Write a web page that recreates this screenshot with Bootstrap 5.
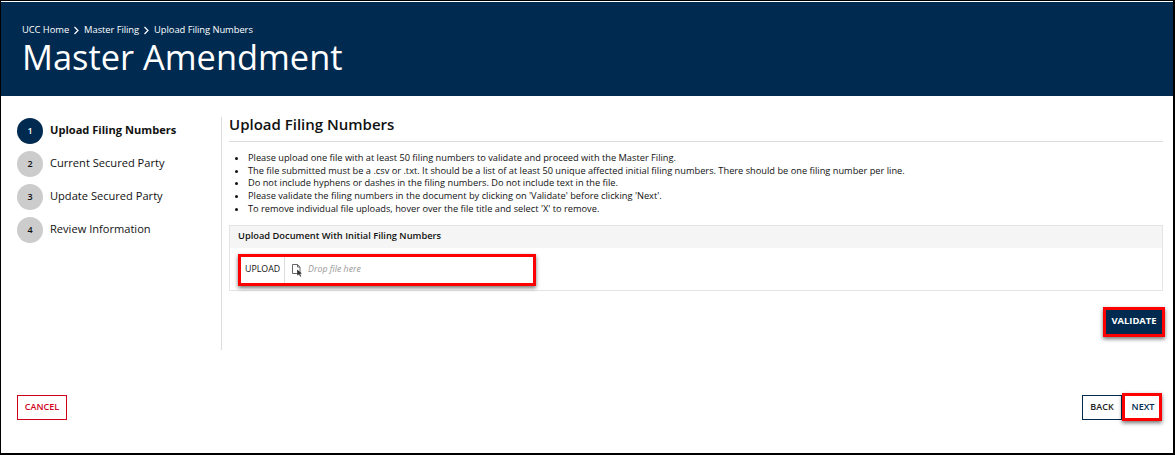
<!DOCTYPE html>
<html lang="en">
<head>
    <meta charset="UTF-8">
    <meta name="viewport" content="width=device-width, initial-scale=1.0">
    <title>Master Amendment</title>
    <link href="https://cdn.jsdelivr.net/npm/bootstrap@5.3.0/dist/css/bootstrap.min.css" rel="stylesheet">
    <style>
        body {
            font-family: "Open Sans", "Noto Sans", sans-serif;
            color: #111;
            background: #fff;
        }
        .page-frame {
            height: 455px;
            border: 1px solid #000;
            border-width: 1px 2px 2px 1px;
            overflow: hidden;
        }
        .page-head {
            height: 94px;
            margin-top: 1px;
            padding: 21px 21px 0;
            background: #002a50;
            color: #fff;
        }
        .crumbs {
            font-size: 9.4px;
            line-height: 14px;
            letter-spacing: -.06px;
        }
        .crumbs svg { margin: 0 4px; }
        .page-title {
            font-size: 34.4px;
            line-height: 40px;
            font-weight: 400;
            margin: 0;
        }
        .body-row {
            padding: 21px 10px 0 16px;
        }
        .steps {
            width: 204px;
            margin-top: -3px;
        }
        .step-item {
            height: 33px;
            font-size: 11.1px;
        }
        .step-num {
            width: 26px;
            height: 26px;
            border-radius: 50%;
            background: #ccc;
            font-size: 9px;
            font-weight: 600;
            margin-right: 7px;
        }
        .step-item.on { font-weight: 700; }
        .step-item.on .step-num { background: #002a50; color: #fff; }
        .main-pane {
            width: 942px;
            height: 233px;
            border-left: 1px solid #ddd;
            padding-left: 7px;
        }
        .pane-title {
            font-size: 15px;
            line-height: 14px;
            font-weight: 600;
            margin: 0;
            padding-bottom: 10px;
            border-bottom: 1px solid #ddd;
        }
        .rules {
            font-size: 9.26px;
            line-height: 12.7px;
            padding-left: 19px;
            margin: 10px 0 0;
        }
        .up-panel {
            margin-top: 9px;
            border: 1px solid #e4e4e4;
        }
        .up-head {
            height: 22px;
            padding: 0 0 2px 8px;
            background: #f5f5f5;
            font-size: 9.3px;
            font-weight: 600;
        }
        .up-body {
            padding: 6px 8px 4px;
        }
        .hot-mark {
            border: 3px solid #f00;
            box-shadow: 0 2px 4px rgba(0, 0, 0, .55);
        }
        .drop-box {
            width: 298px;
            height: 32px;
        }
        .up-btn {
            height: 100%;
            padding: 1px 4px 0;
            border-right: 1px solid #ddd;
            font-size: 8.8px;
            font-weight: 500;
        }
        .file-icon { margin: 1px 5px 0 7px; }
        .drop-text {
            padding-top: 1px;
            font-size: 8.8px;
            font-style: italic;
            color: #999;
        }
        .validate-btn {
            width: 62px;
            height: 30px;
            padding: 0;
            border-radius: 0;
            background: #002a50;
            color: #fff;
            font-size: 9.4px;
            font-weight: 700;
            margin: 16px -2px 0 0;
        }
        .foot-row {
            padding: 43px 11px 0 16px;
        }
        .foot-btn {
            width: 40px;
            height: 25px;
            padding: 0;
            border-radius: 0;
            font-size: 9px;
            font-weight: 600;
            background: #fff;
        }
        .cancel-btn { width: 50px; border: 1px solid #d0021b; color: #d0021b; }
        .back-btn { border: 1px solid #002a50; color: #222; }
        .next-btn {
            width: 40px;
            height: 28px;
            padding-left: 2px;
            color: #002a50;
        }
    </style>
</head>
<body>
    <div class="page-frame">
        <header class="page-head">
            <div class="crumbs d-flex align-items-center">
                <span>UCC Home</span>
                <svg width="7" height="9" viewBox="0 0 7 9"><path d="M1.5 1l3.5 3.5L1.5 8" fill="none" stroke="#fff" stroke-width="1.2"/></svg>
                <span>Master Filing</span>
                <svg width="7" height="9" viewBox="0 0 7 9"><path d="M1.5 1l3.5 3.5L1.5 8" fill="none" stroke="#fff" stroke-width="1.2"/></svg>
                <span>Upload Filing Numbers</span>
            </div>
            <h1 class="page-title">Master Amendment</h1>
        </header>

        <div class="body-row d-flex">
            <div class="steps">
                <div class="step-item on d-flex align-items-center"><span class="step-num d-flex align-items-center justify-content-center">1</span>Upload Filing Numbers</div>
                <div class="step-item d-flex align-items-center"><span class="step-num d-flex align-items-center justify-content-center">2</span>Current Secured Party</div>
                <div class="step-item d-flex align-items-center"><span class="step-num d-flex align-items-center justify-content-center">3</span>Update Secured Party</div>
                <div class="step-item d-flex align-items-center"><span class="step-num d-flex align-items-center justify-content-center">4</span>Review Information</div>
            </div>
            <main class="main-pane">
                <h2 class="pane-title">Upload Filing Numbers</h2>
                <ul class="rules">
                    <li>Please upload one file with at least 50 filing numbers to validate and proceed with the Master Filing.</li>
                    <li>The file submitted must be a .csv or .txt. It should be a list of at least 50 unique affected initial filing numbers. There should be one filing number per line.</li>
                    <li>Do not include hyphens or dashes in the filing numbers. Do not include text in the file.</li>
                    <li>Please validate the filing numbers in the document by clicking on 'Validate' before clicking 'Next'.</li>
                    <li>To remove individual file uploads, hover over the file title and select 'X' to remove.</li>
                </ul>
                <div class="up-panel">
                    <div class="up-head d-flex align-items-center">Upload Document With Initial Filing Numbers</div>
                    <div class="up-body">
                        <div class="drop-box hot-mark d-flex align-items-center">
                            <span class="up-btn d-flex align-items-center">UPLOAD</span>
                            <svg class="file-icon" width="11" height="13" viewBox="0 0 11 13">
                                <path d="M.5.5h5l2.5 2.5v6.5h-7.5z" fill="#fff" stroke="#666"/>
                                <path d="M5.5.5v2.5h2.5" fill="none" stroke="#666"/>
                                <path d="M5 5.5l5 4-2 .3 1.2 2.4-1 .5-1.2-2.4-1.6 1.4z" fill="#333"/>
                            </svg>
                            <span class="drop-text">Drop file here</span>
                        </div>
                    </div>
                </div>
                <div class="d-flex justify-content-end">
                    <button type="button" class="btn validate-btn hot-mark">VALIDATE</button>
                </div>
            </main>
        </div>

        <div class="foot-row d-flex justify-content-between align-items-center">
            <button type="button" class="btn foot-btn cancel-btn">CANCEL</button>
            <div class="d-flex align-items-center">
                <button type="button" class="btn foot-btn back-btn">BACK</button>
                <button type="button" class="btn foot-btn next-btn hot-mark">NEXT</button>
            </div>
        </div>
    </div>
    <script src="https://cdn.jsdelivr.net/npm/bootstrap@5.3.0/dist/js/bootstrap.bundle.min.js"></script>
</body>
</html>
